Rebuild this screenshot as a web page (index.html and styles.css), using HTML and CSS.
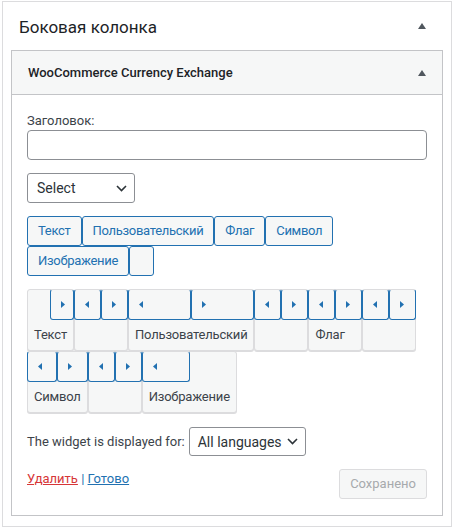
FILE: index.html
```html
<!DOCTYPE html>
<html lang="ru">
<head>
<meta charset="utf-8">
<title>Боковая колонка</title>
<link rel="stylesheet" href="styles.css">
</head>
<body>
<div class="sidebar">
  <div class="sidebar-head">
    <h2 class="sidebar-title">Боковая колонка</h2>
    <svg class="toggle" width="8" height="6" viewBox="0 0 8 6"><polygon points="4,0 8,6 0,6" fill="#50575e"/></svg>
  </div>
  <div class="widget">
    <div class="widget-top">
      <h3 class="widget-title">WooCommerce Currency Exchange</h3>
      <svg class="toggle" width="8" height="6" viewBox="0 0 8 6"><polygon points="4,0 8,6 0,6" fill="#50575e"/></svg>
    </div>
    <div class="widget-inside">
      <label class="field-label">Заголовок:</label>
      <div class="text-input"></div>

      <div class="select select-type">
        <span>Select</span>
        <svg width="11" height="7" viewBox="0 0 11 7"><path d="M1 1l4.5 4.5L10 1" fill="none" stroke="#2c3338" stroke-width="1.6"/></svg>
      </div>

      <div class="btn-group">
        <span class="btn">Текст</span><span class="btn">Пользовательский</span><span class="btn">Флаг</span><span class="btn">Символ</span><span class="btn">Изображение</span><span class="btn btn-empty"></span>
      </div>

      <div class="sortable">
        <div class="item">
          <div class="item-btns"><span class="spacer"></span><span class="arrow"><svg width="4" height="7" viewBox="0 0 4 7"><polygon points="0,0 4,3.5 0,7" fill="#2271b1"/></svg></span></div>
          <div class="item-label">Текст</div>
        </div>
        <div class="item">
          <div class="item-btns"><span class="arrow"><svg width="4" height="7" viewBox="0 0 4 7"><polygon points="4,0 4,7 0,3.5" fill="#2271b1"/></svg></span><span class="arrow"><svg width="4" height="7" viewBox="0 0 4 7"><polygon points="0,0 4,3.5 0,7" fill="#2271b1"/></svg></span></div>
          <div class="item-label"></div>
        </div>
        <div class="item">
          <div class="item-btns"><span class="arrow"><svg width="4" height="7" viewBox="0 0 4 7"><polygon points="4,0 4,7 0,3.5" fill="#2271b1"/></svg></span><span class="arrow"><svg width="4" height="7" viewBox="0 0 4 7"><polygon points="0,0 4,3.5 0,7" fill="#2271b1"/></svg></span></div>
          <div class="item-label">Пользовательский</div>
        </div>
        <div class="item">
          <div class="item-btns"><span class="arrow"><svg width="4" height="7" viewBox="0 0 4 7"><polygon points="4,0 4,7 0,3.5" fill="#2271b1"/></svg></span><span class="arrow"><svg width="4" height="7" viewBox="0 0 4 7"><polygon points="0,0 4,3.5 0,7" fill="#2271b1"/></svg></span></div>
          <div class="item-label"></div>
        </div>
        <div class="item">
          <div class="item-btns"><span class="arrow"><svg width="4" height="7" viewBox="0 0 4 7"><polygon points="4,0 4,7 0,3.5" fill="#2271b1"/></svg></span><span class="arrow"><svg width="4" height="7" viewBox="0 0 4 7"><polygon points="0,0 4,3.5 0,7" fill="#2271b1"/></svg></span></div>
          <div class="item-label">Флаг</div>
        </div>
        <div class="item">
          <div class="item-btns"><span class="arrow"><svg width="4" height="7" viewBox="0 0 4 7"><polygon points="4,0 4,7 0,3.5" fill="#2271b1"/></svg></span><span class="arrow"><svg width="4" height="7" viewBox="0 0 4 7"><polygon points="0,0 4,3.5 0,7" fill="#2271b1"/></svg></span></div>
          <div class="item-label"></div>
        </div>
        <div class="item">
          <div class="item-btns"><span class="arrow"><svg width="4" height="7" viewBox="0 0 4 7"><polygon points="4,0 4,7 0,3.5" fill="#2271b1"/></svg></span><span class="arrow"><svg width="4" height="7" viewBox="0 0 4 7"><polygon points="0,0 4,3.5 0,7" fill="#2271b1"/></svg></span></div>
          <div class="item-label">Символ</div>
        </div>
        <div class="item">
          <div class="item-btns"><span class="arrow"><svg width="4" height="7" viewBox="0 0 4 7"><polygon points="4,0 4,7 0,3.5" fill="#2271b1"/></svg></span><span class="arrow"><svg width="4" height="7" viewBox="0 0 4 7"><polygon points="0,0 4,3.5 0,7" fill="#2271b1"/></svg></span></div>
          <div class="item-label"></div>
        </div>
        <div class="item">
          <div class="item-btns"><span class="arrow"><svg width="4" height="7" viewBox="0 0 4 7"><polygon points="4,0 4,7 0,3.5" fill="#2271b1"/></svg></span><span class="spacer"></span></div>
          <div class="item-label">Изображение</div>
        </div>
      </div>

      <div class="lang-row">
        <span class="lang-label">The widget is displayed for:</span>
        <div class="select select-lang">
          <span>All languages</span>
          <svg width="11" height="7" viewBox="0 0 11 7"><path d="M1 1l4.5 4.5L10 1" fill="none" stroke="#2c3338" stroke-width="1.6"/></svg>
        </div>
      </div>

      <div class="widget-footer">
        <div class="links"><a class="link-delete">Удалить</a> <span class="sep">|</span> <a class="link-done">Готово</a></div>
        <span class="btn-saved">Сохранено</span>
      </div>
    </div>
  </div>
</div>
</body>
</html>
```
FILE: styles.css
```css
* { box-sizing: border-box; }
html, body { margin: 0; padding: 0; background: #ffffff; }
body {
  font-family: Roboto, "Open Sans", sans-serif;
  font-size: 13px;
  color: #3c434a;
  line-height: 18px;
}
.sidebar {
  margin: 1px 0 0 2px;
  width: 450px;
  height: 526px;
  border: 1px solid #dcdcde;
  background: #fff;
}
.sidebar-head {
  height: 48px;
  display: flex;
  align-items: center;
  justify-content: space-between;
  padding: 0 25px 0 16px;
}
.sidebar-title {
  margin: 0;
  font-size: 17px;
  font-weight: 400;
  color: #1d2327;
  line-height: 24px;
  position: relative;
  top: 1px;
}
.toggle { display: block; }
.widget {
  margin: 0 8px;
  border: 1px solid #c3c4c7;
}
.widget-top {
  height: 44px;
  background: #f6f7f7;
  border-bottom: 1px solid #c3c4c7;
  display: flex;
  align-items: center;
  justify-content: space-between;
  padding: 0 16px;
}
.widget-title {
  margin: 0;
  font-size: 13px;
  font-weight: 500;
  color: #1d2327;
}
.widget-inside {
  padding: 17px 15px 16px;
}
.field-label { display: block; color: #3c434a; }
.text-input {
  height: 30px;
  border: 1px solid #8c8f94;
  border-radius: 4px;
  background: #fff;
}
.select {
  display: flex;
  align-items: center;
  justify-content: space-between;
  height: 30px;
  border: 1px solid #8c8f94;
  border-radius: 3px;
  background: #fff;
  color: #2c3338;
  font-size: 14px;
  padding: 0 7px 0 9px;
}
.select-type { width: 108px; margin-top: 13px; }
.btn-group {
  margin-top: 13px;
  display: flex;
  flex-wrap: wrap;
}
.btn {
  display: inline-block;
  height: 30px;
  line-height: 28px;
  padding: 0 10px;
  border: 1px solid #2271b1;
  border-radius: 3px;
  background: #f6f7f7;
  color: #2271b1;
  margin-right: 0;
  letter-spacing: -0.3px;
}
.btn-empty { width: 25px; }
.sortable {
  margin-top: 13px;
  display: flex;
  flex-wrap: wrap;
  align-items: flex-start;
}
.item {
  display: flex;
  flex-direction: column;
  border: 1px solid #dcdcde;
  border-radius: 3px;
  background: #f6f7f7;
  box-shadow: 0 1px 0 #dcdcde;
}
.item-btns {
  display: flex;
  height: 30px;
  margin: -1px -1px 0;
}
.item-btns > span {
  flex: 1 1 0;
  min-width: 0;
  height: 31px;
}
.arrow {
  display: flex;
  align-items: center;
  justify-content: flex-start;
  border: 1px solid #2271b1;
  border-top-color: #dcdcde;
  border-radius: 3px;
  background: #f6f7f7;
}
.arrow svg { display: block; flex: none; margin: 0 11px 0 10px; }
.item-label {
  height: 31px;
  line-height: 31px;
  padding: 0 6px;
  white-space: nowrap;
  color: #3c434a;
  letter-spacing: -0.2px;
}
.lang-row {
  margin-top: 14px;
  display: flex;
  align-items: center;
  gap: 4px;
}
.select-lang { width: 117px; height: 29px; padding: 0 7px 0 8px; }
.widget-footer {
  margin-top: 13px;
  display: flex;
  justify-content: space-between;
  align-items: flex-start;
}
.links { margin-top: 1px; color: #2271b1; }
.link-delete { color: #d63638; text-decoration: underline; }
.link-done { color: #2271b1; text-decoration: underline; }
.sep { color: #2271b1; }
.btn-saved {
  display: inline-block;
  height: 30px;
  line-height: 28px;
  padding: 0 10px;
  border: 1px solid #dcdcde;
  border-radius: 3px;
  background: #f6f7f7;
  color: #a7aaad;
}
```
